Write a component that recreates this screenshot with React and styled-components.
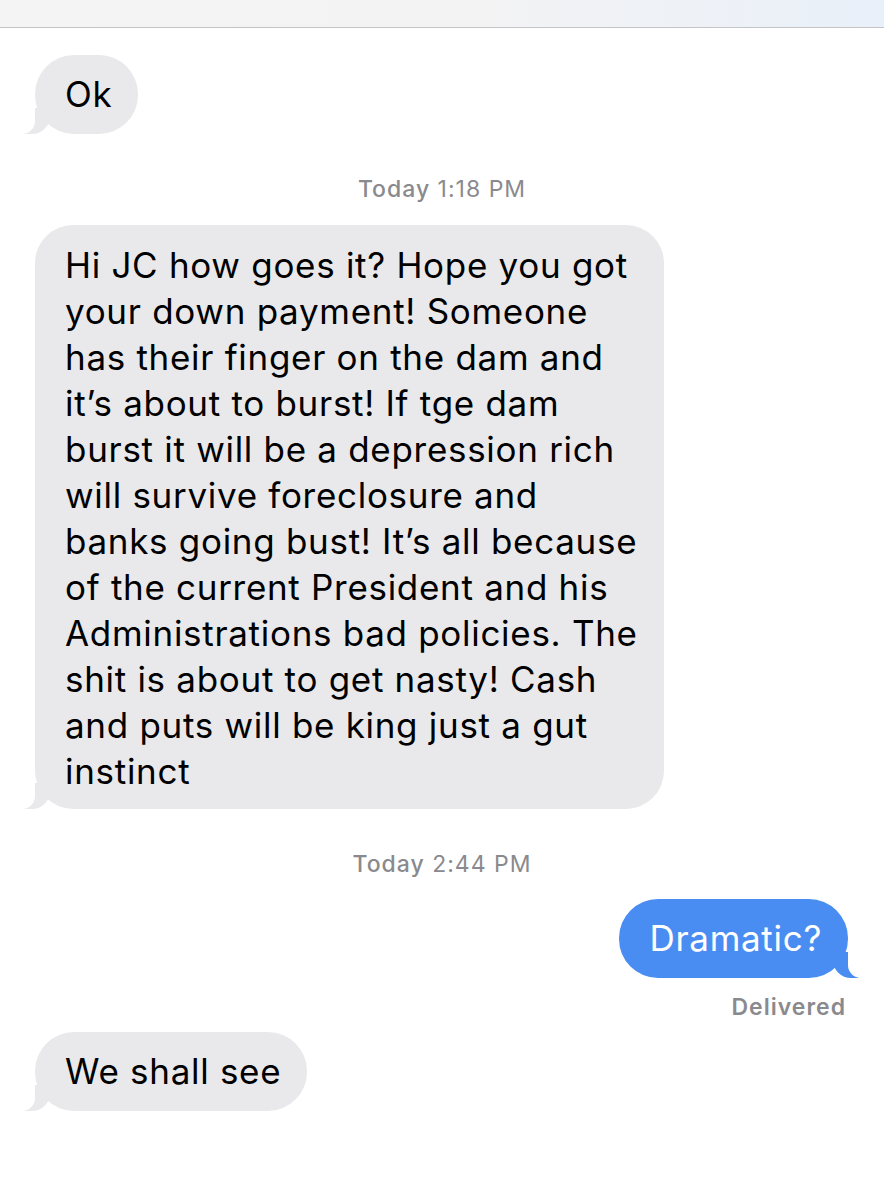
import React from "react";
import styled, { createGlobalStyle, css } from "styled-components";

const GlobalStyle = createGlobalStyle`
    body {
        margin: 0;
        background: #ffffff;
        font-family: Inter, "Liberation Sans", sans-serif;
        -webkit-font-smoothing: antialiased;
    }
`;

const grey = "#e9e9eb";
const blue = "#4a8df2";

const Screen = styled.div`
    width: 884px;
    min-height: 1200px;
    background: #ffffff;
    overflow: hidden;
`;

const TopBar = styled.div`
    height: 27px;
    background: linear-gradient(90deg, #f4f4f5 0%, #f3f3f4 55%, #e9f0f9 100%);
    border-bottom: 1px solid #c4c4c6;
`;

const Thread = styled.div`
    display: flex;
    flex-direction: column;
    padding: 27px 36px 0 35px;
`;

const Row = styled.div`
    display: flex;
    justify-content: ${(props) => (props.$out ? "flex-end" : "flex-start")};
    margin-top: ${(props) => props.$gap || 0}px;
`;

const tailIn = css`
    &::before {
        content: "";
        position: absolute;
        bottom: 0;
        left: -11px;
        width: 26px;
        height: 26px;
        background: ${grey};
        border-bottom-right-radius: 18px;
    }
    &::after {
        content: "";
        position: absolute;
        bottom: 0;
        left: -30px;
        width: 30px;
        height: 28px;
        background: #ffffff;
        border-bottom-right-radius: 13px;
    }
`;

const tailOut = css`
    &::before {
        content: "";
        position: absolute;
        bottom: 0;
        right: -11px;
        width: 26px;
        height: 26px;
        background: ${blue};
        border-bottom-left-radius: 18px;
    }
    &::after {
        content: "";
        position: absolute;
        bottom: 0;
        right: -30px;
        width: 30px;
        height: 28px;
        background: #ffffff;
        border-bottom-left-radius: 13px;
    }
`;

const Bubble = styled.div`
    position: relative;
    z-index: 0;
    padding: 16px 26px 17px 30px;
    border-radius: 39px;
    font-size: 35px;
    line-height: 46px;
    letter-spacing: 0.7px;
    white-space: nowrap;
    background: ${(props) => (props.$out ? blue : grey)};
    color: ${(props) => (props.$out ? "#ffffff" : "#000000")};
    ${(props) => (props.$out ? tailOut : tailIn)}

    &::before,
    &::after {
        z-index: -1;
    }
`;

const LongBubble = styled(Bubble)`
    padding: 17px 26px 15px 30px;
    border-radius: 38px;
`;

const Stamp = styled.div`
    text-align: center;
    font-size: 23px;
    line-height: 26px;
    letter-spacing: 1px;
    color: #8a8a8e;
    margin-top: ${(props) => props.$gap}px;
    padding-left: 1px;

    b {
        font-weight: 500;
    }
`;

const Status = styled.div`
    text-align: right;
    font-size: 23px;
    line-height: 26px;
    letter-spacing: 1px;
    font-weight: 600;
    color: #8a8a8e;
    margin-top: 16px;
    padding-right: 2px;
`;

const lines = [
    "Hi JC how goes it? Hope you got",
    "your down payment! Someone",
    "has their finger on the dam and",
    "it’s about to burst! If tge dam",
    "burst it will be a depression rich",
    "will survive foreclosure and",
    "banks going bust! It’s all because",
    "of the current President and his",
    "Administrations bad policies. The",
    "shit is about to get nasty! Cash",
    "and puts will be king just a gut",
    "instinct",
];

const App = () => {
    return (
        <Screen>
            <GlobalStyle />
            <TopBar />
            <Thread>
                <Row>
                    <Bubble>Ok</Bubble>
                </Row>
                <Stamp $gap={42}>
                    <b>Today</b> 1:18 PM
                </Stamp>
                <Row $gap={23}>
                    <LongBubble>
                        {lines.map((line, i) => (
                            <React.Fragment key={i}>
                                {line}
                                {i < lines.length - 1 && <br />}
                            </React.Fragment>
                        ))}
                    </LongBubble>
                </Row>
                <Stamp $gap={42}>
                    <b>Today</b> 2:44 PM
                </Stamp>
                <Row $out $gap={22}>
                    <Bubble $out>Dramatic?</Bubble>
                </Row>
                <Status>Delivered</Status>
                <Row $gap={12}>
                    <Bubble>We shall see</Bubble>
                </Row>
            </Thread>
        </Screen>
    );
};

export default App;
